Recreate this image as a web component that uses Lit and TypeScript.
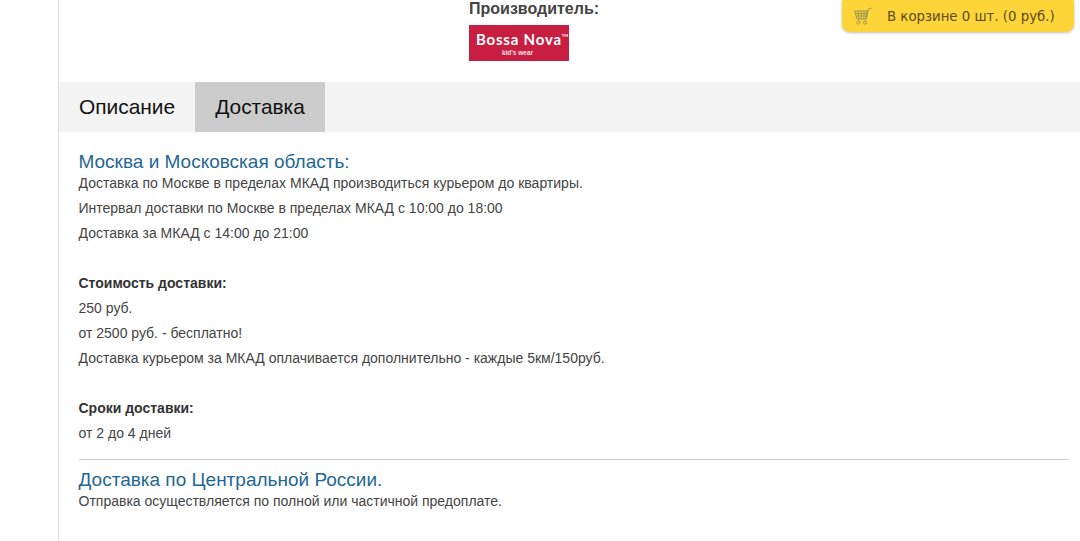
import { LitElement, css, html } from "lit";
import { customElement } from "lit/decorators.js";

@customElement("app-root")
export class AppRoot extends LitElement {
  static styles = css`
    :host {
      display: block;
      height: 541px;
      overflow: hidden;
      position: relative;
      background: #fff;
      font-family: "Liberation Sans", Arial, sans-serif;
      color: #444;
    }

    .page {
      margin-left: 58px;
      height: 541px;
      border-left: 1px solid #ddd;
    }

    .top {
      height: 82px;
      padding-left: 410px;
      box-sizing: border-box;
    }

    .maker-title {
      font-size: 16px;
      font-weight: bold;
      line-height: 18px;
      color: #444;
    }

    .logo {
      display: flex;
      flex-direction: column;
      align-items: center;
      width: 100px;
      height: 36px;
      margin-top: 7px;
      background: #c81e41;
      color: #fff;
      box-sizing: border-box;
      padding-top: 6px;
    }

    .logo-name {
      font-family: "Lato", sans-serif;
      font-size: 15px;
      font-weight: bold;
      line-height: 17px;
      letter-spacing: 0.8px;
      white-space: nowrap;
      margin-left: 6px;
    }

    .logo-name sup {
      font-size: 4px;
      line-height: 0;
      letter-spacing: 0;
      vertical-align: 8px;
    }

    .logo-sub {
      font-size: 6.5px;
      font-weight: bold;
      line-height: 7px;
      margin-top: 1px;
      margin-right: 3px;
      opacity: 0.85;
    }

    .tabs {
      display: flex;
      height: 50px;
      background: #f4f4f4;
    }

    .tab {
      display: flex;
      align-items: center;
      padding: 0 20px;
      font-size: 20.9px;
      color: #111;
    }

    .tab.active {
      background: #ccc;
    }

    .content {
      padding: 19px 11px 0 19.5px;
    }

    h2 {
      margin: 0 0 1px;
      font-size: 19px;
      font-weight: normal;
      line-height: 21px;
      color: #1f6796;
    }

    p {
      margin: 0;
      font-size: 14px;
      line-height: 25px;
      min-height: 25px;
    }

    .first {
      line-height: 20px;
      min-height: 20px;
      margin-bottom: 3px;
    }

    b {
      color: #333;
    }

    hr {
      border: 0;
      border-top: 1px solid #ccc;
      margin: 13px 0 9px;
    }

    .cart {
      position: absolute;
      top: 0;
      left: 842px;
      width: 232px;
      height: 32px;
      display: flex;
      align-items: center;
      gap: 15px;
      box-sizing: border-box;
      padding-left: 11px;
      background: #fdd538;
      border-radius: 0 0 8px 8px;
      box-shadow: 0 1px 3px rgba(0, 0, 0, 0.25);
      font-family: "DejaVu Sans", sans-serif;
      font-size: 13.3px;
      color: #5a4a1e;
    }

    .cart svg {
      display: block;
    }
  `;

  render() {
    return html`
      <div class="page">
        <div class="top">
          <div class="maker-title">Производитель:</div>
          <div class="logo">
            <span class="logo-name">Bossa Nova<sup>TM</sup></span>
            <span class="logo-sub">kid's wear</span>
          </div>
        </div>
        <div class="tabs">
          <div class="tab">Описание</div>
          <div class="tab active">Доставка</div>
        </div>
        <div class="content">
          <h2>Москва и Московская область:</h2>
          <p class="first">Доставка по Москве в пределах МКАД производиться курьером до квартиры.</p>
          <p>Интервал доставки по Москве в пределах МКАД с 10:00 до 18:00</p>
          <p>Доставка за МКАД с 14:00 до 21:00</p>
          <p></p>
          <p><b>Стоимость доставки:</b></p>
          <p>250 руб.</p>
          <p>от 2500 руб. - бесплатно!</p>
          <p>Доставка курьером за МКАД оплачивается дополнительно - каждые 5км/150руб.</p>
          <p></p>
          <p><b>Сроки доставки:</b></p>
          <p>от 2 до 4 дней</p>
          <hr />
          <h2>Доставка по Центральной России.</h2>
          <p class="first">Отправка осуществляется по полной или частичной предоплате.</p>
        </div>
      </div>
      <div class="cart">
        <svg width="19" height="18" viewBox="0 0 19 18" fill="none" stroke="#9c9650" stroke-width="1">
          <path d="M18.5 1 L15.5 2 L13.5 12 H4 L1.5 4 H15" />
          <path d="M2.2 6.5 H15 M3 9 H14.4 M5 4 L6 12 M8 4 L8.5 12 M11 4 L11 12 M13.5 4 L13 12" />
          <circle cx="5.5" cy="15.5" r="1.6" />
          <circle cx="12" cy="15.5" r="1.6" />
        </svg>
        <span>В корзине 0 шт. (0 руб.)</span>
      </div>
    `;
  }
}
